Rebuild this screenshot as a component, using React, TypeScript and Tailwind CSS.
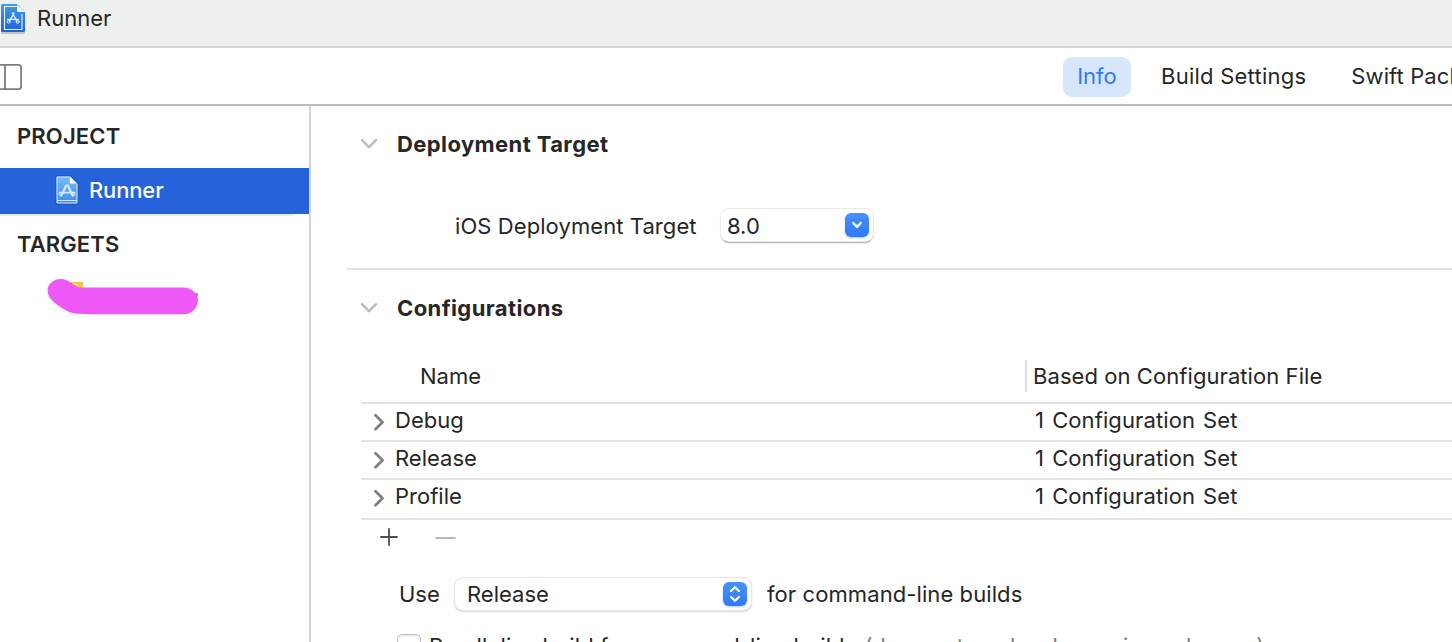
import React from "react";

function HeaderIcon() {
  return (
    <svg width="26" height="32" viewBox="0 0 26 32" fill="none" className="block shrink-0">
      <defs>
        <linearGradient id="hdr" x1="0" y1="0" x2="0" y2="1">
          <stop offset="0" stopColor="#3f9be6" />
          <stop offset="1" stopColor="#2361dc" />
        </linearGradient>
      </defs>
      <path d="M1 3.500Q1 2 2.500 2H18l7.200 8v19.500Q25.200 31 23.700 31H2.500Q1 31 1 29.500Z" fill="#000" opacity=".18" />
      <path d="M1 2.500Q1 1 2.500 1H17.500L25 9v18.500Q25 29 23.500 29H2.500Q1 29 1 27.500Z" fill="url(#hdr)" />
      <path d="M17 3.500H4.500v23H22V11" stroke="#eaf4ff" strokeWidth="1.100" />
      <path d="M17 1v6.500Q17 9 18.500 9H25Z" fill="#f4f5f5" />
      <g stroke="#e6f2ff" strokeWidth="1.300" strokeLinecap="round">
        <path d="M12.400 10l4.600 8.500M14 10L9.300 18.500M7.500 16.300H18.500" />
        <circle cx="8.600" cy="18.800" r="1.400" strokeWidth="1" />
        <circle cx="17.600" cy="18.800" r="1.400" strokeWidth="1" />
      </g>
    </svg>
  );
}

function ProjectIcon() {
  return (
    <svg width="24" height="32" viewBox="0 0 24 32" fill="none" className="block shrink-0">
      <defs>
        <linearGradient id="prj" x1="0" y1="0" x2="0" y2="1">
          <stop offset="0" stopColor="#79bdf3" />
          <stop offset="1" stopColor="#3b8df2" />
        </linearGradient>
      </defs>
      <path d="M.500 .5H16L23.500 8v21.500H.500Z" fill="#1b4fa8" />
      <path d="M1.500 1.500H15.500L22.500 8.500v20H1.500Z" fill="url(#prj)" />
      <path d="M14.500 2H2v26H22V9" stroke="#cbe6fb" strokeWidth="1" />
      <path d="M2 25.500H22" stroke="#cbe6fb" strokeWidth="1" />
      <path d="M14.800 1.500V8.500H22Z" fill="#f5fbff" />
      <g stroke="#d3ebfc" strokeLinecap="round">
        <path d="M11.200 10.500L6.300 20.500M12.800 10.500l4.900 10" strokeWidth="2.200" />
        <path d="M4.500 17.700H19.500" strokeWidth="1.800" />
        <circle cx="5.500" cy="19.300" r="1.400" strokeWidth="1" />
        <circle cx="18.500" cy="19.300" r="1.400" strokeWidth="1" />
      </g>
    </svg>
  );
}

function SidebarToggle() {
  return (
    <svg width="22" height="26" viewBox="0 0 22 26" fill="none" className="mt-[2px] block" stroke="#7e7e7e" strokeWidth="1.800">
      <path d="M-2 .9H18.500Q21.100 .9 21.100 3.500V22.500Q21.100 25.100 18.500 25.100H-2M5 1V25" />
    </svg>
  );
}

function ChevronDown() {
  return (
    <svg width="18" height="12" viewBox="0 0 18 12" fill="none" className="block shrink-0">
      <path d="M2 2.200l7 7 7-7" stroke="#bcbcbc" strokeWidth="2.600" strokeLinecap="round" strokeLinejoin="round" />
    </svg>
  );
}

function ChevronRight() {
  return (
    <svg width="12" height="18" viewBox="0 0 12 18" fill="none" className="block shrink-0">
      <path d="M2.500 2.300l7 7-7 7" stroke="#808080" strokeWidth="2.800" strokeLinecap="round" strokeLinejoin="round" />
    </svg>
  );
}

function SectionTitle({ children }: { children: React.ReactNode }) {
  return (
    <div className="flex h-8 items-center pl-[49px]">
      <ChevronDown />
      <h2 className="ml-[19px] text-[22px] font-bold tracking-[0.4px]">{children}</h2>
    </div>
  );
}

function ConfigRow({ name, className }: { name: string; className: string }) {
  return (
    <div className={`ml-[50px] flex border-b-2 border-[#e3e3e3] ${className}`}>
      <div className="flex h-[32px] w-[674px] items-center pl-[12px]">
        <span className="mt-[4px]">
          <ChevronRight />
        </span>
        <span className="ml-[10px]">{name}</span>
      </div>
      <div className="flex h-[32px] items-center tracking-[0.1px] [word-spacing:1.8px]">1 Configuration Set</div>
    </div>
  );
}

export default function App() {
  return (
    <div className="flex h-[642px] w-[1452px] flex-col overflow-hidden bg-white font-['Inter',sans-serif] text-[22px] leading-[30px] whitespace-nowrap text-[#262626]">
      <header className="flex h-[48px] shrink-0 items-start border-b-2 border-[#d5d7d6] bg-[#eef0ef]">
        <div className="pt-[3px]">
          <HeaderIcon />
        </div>
        <span className="mt-[3px] ml-[11px]">Runner</span>
      </header>

      <nav className="flex h-[58px] shrink-0 items-center border-b-2 border-[#bdbdbd]">
        <div className="w-[1063px] shrink-0">
          <SidebarToggle />
        </div>
        <div className="mt-[2px] flex h-10 w-[68px] shrink-0 items-center justify-center rounded-[9px] bg-[#d6e6fd] pb-[2px] text-[#2f7bf6]">
          Info
        </div>
        <span className="ml-[30px] shrink-0 tracking-[0.24px]">Build Settings</span>
        <span className="ml-[45px] shrink-0 tracking-[0.1px]">Swift Packages</span>
      </nav>

      <div className="flex min-h-0 flex-1">
        <aside className="w-[311px] shrink-0 border-r-2 border-[#d3d3d3]">
          <div className="flex h-[62px] items-center pb-[2px] pl-[17px] font-semibold tracking-[0.15px]">PROJECT</div>
          <div className="flex h-[46px] items-center bg-[#2663da] pb-[2px] pl-[55px] font-medium text-white">
            <div className="pt-[2px]">
              <ProjectIcon />
            </div>
            <span className="ml-[10px] tracking-[-0.15px]">Runner</span>
          </div>
          <div className="h-[2px] w-[293px] bg-[#e9e9e9]" />
          <div className="flex h-[57px] items-center pb-[2px] pl-[17px] font-semibold tracking-[0.1px]">TARGETS</div>
          <svg width="160" height="42" viewBox="0 0 160 42" className="ml-[44px] block">
            <path d="M24 9h15v8H24Z" fill="#f5c344" />
            <path d="M29 11l5 1M31 13l5 2" stroke="#fbe6a8" strokeWidth="1.200" />
            <path d="M151 20.500h2.500v3z" fill="#5d2763" />
            <path
              d="M17 6C25 6 29 13 36 14.500H140C147 14.500 154 20 154 27.500C154 35 147 41.300 140 41.300H50C35 41 29 41 23 38C16 34 10 30 6 25C-.5 15 7 6 17 6Z"
              fill="#ed58f7"
            />
          </svg>
        </aside>

        <main className="min-w-0 flex-1 overflow-hidden">
          <div className="pt-[22px]">
            <SectionTitle>Deployment Target</SectionTitle>
          </div>
          <div className="mt-[48px] flex h-[34px] items-center pl-[144px]">
            <span className="mt-[2px] w-[242px] tracking-[0.08px]">iOS Deployment Target</span>
            <div className="ml-[24px] flex h-[32px] w-[152px] items-center justify-between rounded-[8px] bg-white pr-[4px] pl-[6px] shadow-[0_0_0_1px_#e9e9e9,0_1.5px_1.5px_#a8a8a8]">
              <span className="mt-[2px]">8.0</span>
              <span className="flex size-6 items-center justify-center rounded-[6px] bg-linear-to-b from-[#4793f9] to-[#2f78f6] shadow-[0_1px_2px_#a9c9fb]">
                <svg width="12" height="8" viewBox="0 0 12 8" fill="none">
                  <path d="M2.200 2l3.800 3.800L9.800 2" stroke="#fff" strokeWidth="2.400" strokeLinecap="round" strokeLinejoin="round" />
                </svg>
              </span>
            </div>
          </div>
          <div className="mt-[26px] ml-[36px] h-[2px] bg-[#e3e3e3]" />

          <div className="pt-[22px]">
            <SectionTitle>Configurations</SectionTitle>
          </div>
          <div className="mt-[36px] ml-[50px] flex h-[44px] border-b-2 border-[#e3e3e3]">
            <div className="flex h-8 w-[664px] items-center pl-[59px]">Name</div>
            <div className="flex h-8 items-center border-l-2 border-[#e0e0e0] pl-[6px] tracking-[0.07px]">
              Based on Configuration File
            </div>
          </div>
          <ConfigRow name="Debug" className="h-[38px]" />
          <ConfigRow name="Release" className="h-[38px]" />
          <ConfigRow name="Profile" className="h-[40px]" />

          <div className="flex h-[36px] items-center pb-[2px] pl-[69px]">
            <svg width="76" height="18" viewBox="0 0 76 18" fill="none" className="block">
              <path d="M1 9H17M9 1V17" stroke="#4d4d4d" strokeWidth="1.800" strokeLinecap="round" />
              <path d="M55.500 10H75.500" stroke="#b9b9b9" strokeWidth="2" />
            </svg>
          </div>

          <div className="mt-[21px] flex h-[34px] items-center pl-[88px]">
            <span className="w-[40px]">Use</span>
            <div className="ml-[16px] flex h-[32px] w-[296px] items-center justify-between rounded-[8px] bg-white pr-[4px] pl-[12px] shadow-[0_0_0_1px_#e6e6e6,0_1px_2.500px_#9c9c9c]">
              <span>Release</span>
              <span className="flex size-6 items-center justify-center rounded-[6px] bg-linear-to-b from-[#4793f9] to-[#2f78f6] shadow-[0_1px_2px_#a9c9fb]">
                <svg width="12" height="18" viewBox="0 0 12 18" fill="none">
                  <path d="M2 6l4-3.800L10 6M2 12l4 3.800L10 12" stroke="#fff" strokeWidth="2.200" strokeLinecap="round" strokeLinejoin="round" />
                </svg>
              </span>
            </div>
            <span className="ml-[16px] tracking-[0.09px]">for command-line builds</span>
          </div>

          <div className="mt-[20px] flex h-[30px] items-start pl-[86px] tracking-[0.13px]">
            <span className="mt-[3px] size-6 rounded-[5px] border-[1.500px] border-[#bdbdbd] bg-white shadow-[inset_0_2px_2px_#ececec]" />
            <span className="ml-[8px]">Parallelize build for command-line builds</span>
            <span className="ml-[8px] text-[#808080]">(does not apply when using schemes)</span>
          </div>
        </main>
      </div>
    </div>
  );
}
